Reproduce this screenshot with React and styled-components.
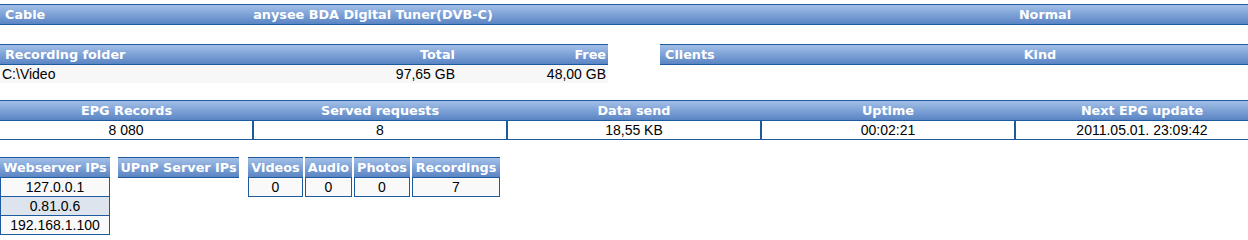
import React from "react";
import styled, { createGlobalStyle, css } from "styled-components";

const Global = createGlobalStyle`
  html, body { margin: 0; padding: 0; background: #fff; overflow: hidden; }
  body { font-family: "Liberation Sans", Arial, sans-serif; font-size: 14px; color: #000; }
`;

const BORDER = "#1d5a9e";

const headBg = css`
  background: linear-gradient(to bottom, #a2bfe8 0%, #7ea2d6 50%, #5a84c3 100%);
  border-top: 1px solid ${BORDER};
  border-bottom: 1px solid ${BORDER};
`;

const Page = styled.div`
  display: flex;
  flex-direction: column;
  padding-top: 4px;
  width: 1248px;
`;

const Grid = styled.div`
  display: grid;
  grid-template-columns: ${(p) => p.$cols};
  column-gap: ${(p) => p.$gap || 0}px;
`;

const HeadRow = styled(Grid)`
  ${headBg}
`;

const Th = styled.div`
  height: 19px;
  line-height: 20px;
  padding: 0 ${(p) => (p.$pad != null ? p.$pad : 5)}px;
  color: #fff;
  font-family: "DejaVu Sans", Verdana, sans-serif;
  font-weight: bold;
  font-size: 12.8px;
  white-space: nowrap;
  text-align: ${(p) => p.$align || "center"};
  overflow: hidden;
`;

const BoxTh = styled(Th)`
  ${headBg}
`;

const EmptyRow = styled.div`
  height: 19px;
`;

const DataRow = styled(Grid)`
  background: ${(p) => p.$bg || "transparent"};
`;

const Td = styled.div`
  height: 18px;
  line-height: 18px;
  padding: 0 ${(p) => (p.$pad != null ? p.$pad : 2)}px;
  text-align: ${(p) => p.$align || "left"};
  white-space: nowrap;
`;

const TopSection = styled.section`
  display: flex;
  flex-direction: column;
`;

const SplitRow = styled.div`
  display: flex;
  align-items: flex-start;
  gap: 52px;
`;

const StatsSection = styled.section`
  margin-top: 16px;
  width: 1269px;
`;

const StatCell = styled(Td)`
  background: #fff;
  text-align: center;
  border-bottom: 1px solid ${BORDER};
  border-left: ${(p) => (p.$first ? "none" : `1px solid ${BORDER}`)};
  border-right: 1px solid ${BORDER};
`;

const BottomRow = styled.div`
  display: flex;
  align-items: flex-start;
  gap: 8px;
  margin-top: 17px;
`;

const SmallTable = styled.div`
  display: flex;
  flex-direction: column;
  width: ${(p) => p.$w}px;
`;

const IpCell = styled(Td)`
  text-align: center;
  background: ${(p) => (p.$alt ? "#dde4ee" : "#f9f9f9")};
  border: 1px solid ${BORDER};
  border-top: none;
`;

const MediaGroup = styled.div`
  display: grid;
  grid-template-columns: 55px 47px 56px 88px;
  column-gap: 2px;
  margin-left: 1px;
`;

const MediaCell = styled(Td)`
  text-align: center;
  background: #f9f9f9;
  border: 1px solid ${BORDER};
  border-top: none;
`;

const stats = [
  ["EPG Records", "8 080"],
  ["Served requests", "8"],
  ["Data send", "18,55 KB"],
  ["Uptime", "00:02:21"],
  ["Next EPG update", "2011.05.01. 23:09:42"],
];

const media = [
  ["Videos", "0"],
  ["Audio", "0"],
  ["Photos", "0"],
  ["Recordings", "7"],
];

const ips = ["127.0.0.1", "0.81.0.6", "192.168.1.100"];

export default function App() {
  return (
    <>
      <Global />
      <Page>
        <TopSection>
          <HeadRow $cols="130px 486px 226px 406px">
            <Th $align="left">Cable</Th>
            <Th>anysee BDA Digital Tuner(DVB-C)</Th>
            <Th></Th>
            <Th>Normal</Th>
          </HeadRow>
          <EmptyRow />
        </TopSection>

        <SplitRow>
          <SmallTable $w={608}>
            <HeadRow $cols="1fr 150px 151px">
              <Th $align="left">Recording folder</Th>
              <Th $align="right" $pad={2}>Total</Th>
              <Th $align="right" $pad={2}>Free</Th>
            </HeadRow>
            <DataRow $cols="1fr 150px 151px" $bg="#f7f7f7">
              <Td>C:\Video</Td>
              <Td $align="right">97,65 GB</Td>
              <Td $align="right">48,00 GB</Td>
            </DataRow>
          </SmallTable>
          <SmallTable $w={588}>
            <HeadRow $cols="172px 416px">
              <Th $align="left">Clients</Th>
              <Th>Kind</Th>
            </HeadRow>
            <EmptyRow />
          </SmallTable>
        </SplitRow>

        <StatsSection>
          <HeadRow $cols="253px repeat(4, 254px)">
            {stats.map(([h]) => (
              <Th key={h}>{h}</Th>
            ))}
          </HeadRow>
          <Grid $cols="253px repeat(4, 254px)">
            {stats.map(([h, v], i) => (
              <StatCell key={h} $first={i === 0}>
                {v}
              </StatCell>
            ))}
          </Grid>
        </StatsSection>

        <BottomRow>
          <SmallTable $w={110}>
            <BoxTh $pad={0}>Webserver IPs</BoxTh>
            {ips.map((ip, i) => (
              <IpCell key={ip} $alt={i === 1}>
                {ip}
              </IpCell>
            ))}
          </SmallTable>
          <SmallTable $w={121}>
            <BoxTh $pad={0}>UPnP Server IPs</BoxTh>
          </SmallTable>
          <MediaGroup>
            {media.map(([h]) => (
              <BoxTh key={h} $pad={0}>
                {h}
              </BoxTh>
            ))}
            {media.map(([h, v]) => (
              <MediaCell key={h}>{v}</MediaCell>
            ))}
          </MediaGroup>
        </BottomRow>
      </Page>
    </>
  );
}
